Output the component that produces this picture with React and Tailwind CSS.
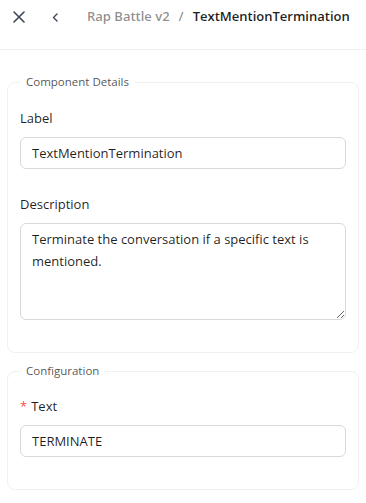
import React from "react";

const font = { fontFamily: '"Open Sans", "Noto Sans", sans-serif' };

function Field({ label, required, children }) {
  return (
    <div className="mb-6">
      <div className="h-[22px] mb-2 flex items-center text-[13px] leading-[22px] text-[rgba(0,0,0,0.88)]">
        {required && <span className="text-[#ff4d4f] mr-[4px] text-[13px] leading-none">*</span>}
        {label}
      </div>
      {children}
    </div>
  );
}

export default function App() {
  return (
    <div className="w-[366px] h-[503px] bg-white overflow-hidden" style={font}>
      <div className="h-[50px] border-b border-[#f0f0f0] flex items-start">
        <div className="h-[34px] w-full flex items-center whitespace-nowrap">
          <div className="w-[13px] shrink-0" />
          <svg width="12" height="12" viewBox="0 0 12 12" className="text-[#3f4654] shrink-0">
            <path d="M1 1 L11 11 M11 1 L1 11" stroke="currentColor" strokeWidth="1.6" strokeLinecap="round" />
          </svg>
          <div className="w-[27px] shrink-0" />
          <svg width="6" height="9" viewBox="0 0 6 9" className="text-[#3f4654] shrink-0">
            <path d="M5 1 L1.5 4.5 L5 8" stroke="currentColor" strokeWidth="1.4" fill="none" strokeLinecap="round" strokeLinejoin="round" />
          </svg>
          <div className="w-[29px] shrink-0" />
          <span className="text-[13px] font-semibold text-[rgba(0,0,0,0.45)]">Rap Battle v2</span>
          <span className="text-[13px] font-semibold text-[rgba(0,0,0,0.45)] mx-[9px]">/</span>
          <span className="text-[13px] font-semibold text-[rgba(0,0,0,0.88)]">TextMentionTermination</span>
        </div>
      </div>

      <div className="px-[7px] pt-[22px]">
        <fieldset className="border border-[#f0f0f0] rounded-lg px-3 pb-2 w-[352px]">
          <legend className="px-[6px] text-[11.5px] leading-5 text-[rgba(0,0,0,0.7)]">Component Details</legend>
          <div className="pt-[15px]">
            <Field label="Label">
              <input
                readOnly
                value="TextMentionTermination"
                className="w-[326px] h-8 border border-[#d9d9d9] rounded-md px-[11px] text-[13px] text-[rgba(0,0,0,0.88)] outline-none"
                style={font}
              />
            </Field>
            <Field label="Description">
              <textarea
                readOnly
                value="Terminate the conversation if a specific text is mentioned."
                className="block w-[326px] h-[97px] border border-[#d9d9d9] rounded-md px-[11px] py-1 text-[13px] leading-[22px] text-[rgba(0,0,0,0.88)] outline-none"
                style={font}
              />
            </Field>
          </div>
        </fieldset>

        <fieldset className="border border-[#f0f0f0] rounded-lg px-3 pb-2 w-[352px] mt-2">
          <legend className="px-[6px] text-[11.5px] leading-5 text-[rgba(0,0,0,0.7)]">Configuration</legend>
          <div className="pt-[14px]">
            <Field label="Text" required>
              <input
                readOnly
                value="TERMINATE"
                className="w-[326px] h-8 border border-[#d9d9d9] rounded-md px-[11px] text-[13px] text-[rgba(0,0,0,0.88)] outline-none"
                style={font}
              />
            </Field>
          </div>
        </fieldset>
      </div>
    </div>
  );
}
